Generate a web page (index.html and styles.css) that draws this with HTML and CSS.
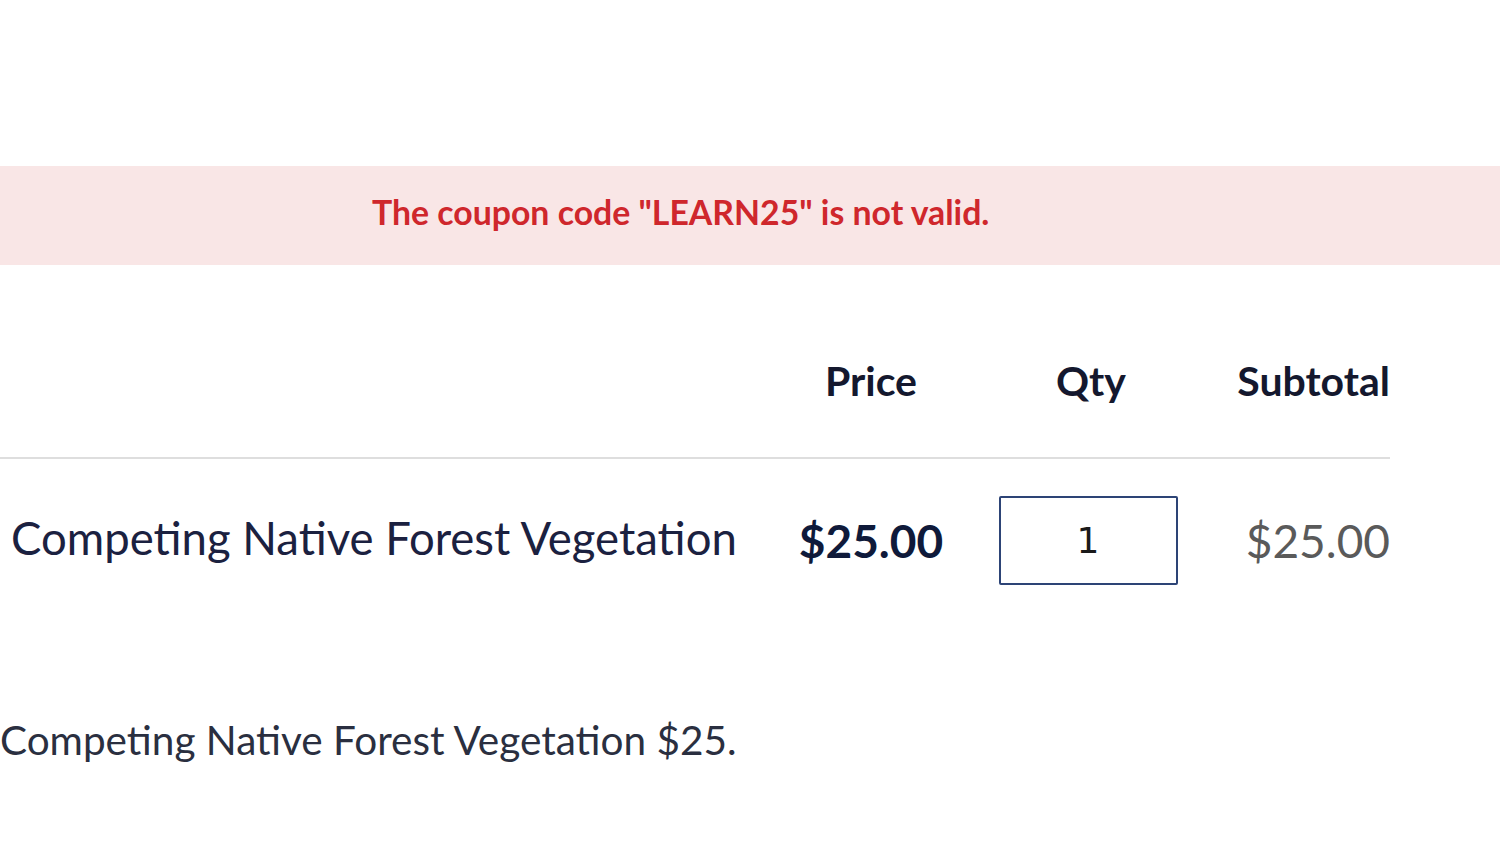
FILE: index.html
```html
<!DOCTYPE html>
<html>
<head>
<meta charset="utf-8">
<link rel="stylesheet" href="styles.css">
</head>
<body>
<div class="page">
  <div class="notice">The coupon code "LEARN25" is not valid.</div>
  <table class="cart">
    <thead>
      <tr>
        <th class="c-name"></th>
        <th class="c-price">Price</th>
        <th class="c-qty">Qty</th>
        <th class="c-sub">Subtotal</th>
      </tr>
    </thead>
    <tbody>
      <tr>
        <td class="c-name name">Competing Native Forest Vegetation</td>
        <td class="c-price price">$25.00</td>
        <td class="c-qty qcell"><div class="qty">1</div></td>
        <td class="c-sub sub">$25.00</td>
      </tr>
    </tbody>
  </table>
  <p class="desc">Competing Native Forest Vegetation $25.</p>
</div>
</body>
</html>
```
FILE: styles.css
```css
html, body {
  margin: 0;
  padding: 0;
  background: #fff;
}
.page {
  width: 1500px;
  height: 854px;
  overflow: hidden;
  font-family: Lato, "Open Sans", sans-serif;
  padding-top: 166px;
  box-sizing: border-box;
}
.notice {
  height: 99px;
  background: #f9e6e6;
  color: #cf272c;
  font-size: 33.8px;
  font-weight: 700;
  line-height: 92px;
  padding-left: 372px;
  box-sizing: border-box;
}
.cart {
  border-collapse: collapse;
  table-layout: fixed;
  width: 1390px;
  margin-top: 77px;
}
.cart th {
  font-size: 41px;
  font-weight: 700;
  color: #14182e;
  height: 101px;
  vertical-align: top;
  padding: 14px 0 0;
  border-bottom: 2px solid #dedede;
}
.c-name { text-align: left; width: 770px; }
.c-price { text-align: center; width: 202px; }
.c-qty { text-align: center; width: 238px; }
.c-sub { text-align: right; }
.cart td {
  height: 162px;
  padding: 0;
  vertical-align: middle;
}
.cart td.name {
  font-size: 45.5px;
  color: #1b2140;
  height: 156px;
  padding: 0 0 6px 11px;
  white-space: nowrap;
}
.price {
  font-size: 46px;
  font-weight: 700;
  color: #0f1a3a;
}
.cart td.qcell {
  padding-right: 6px;
}
.qty {
  width: 179px;
  height: 89px;
  box-sizing: border-box;
  border: 2px solid #2d4476;
  border-radius: 2px;
  margin: 0 auto;
  font-family: "DejaVu Sans", sans-serif;
  font-size: 36px;
  line-height: 85px;
  color: #1a1a1a;
  text-align: center;
}
.sub {
  font-size: 46px;
  color: #5a5a5a;
}
.desc {
  margin: 94px 0 0;
  font-size: 40.5px;
  color: #2a2f40;
}
```
